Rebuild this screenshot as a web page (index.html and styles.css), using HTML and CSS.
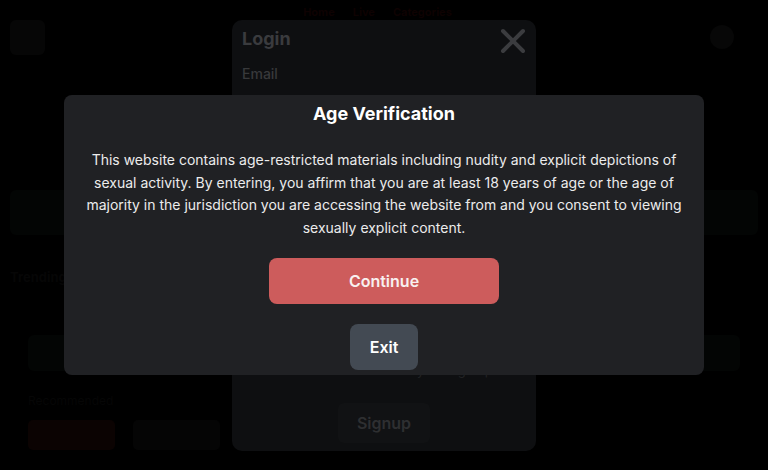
FILE: index.html
```html
<!DOCTYPE html>
<html lang="en">
<head>
<meta charset="utf-8">
<title>Age Verification</title>
<link rel="stylesheet" href="styles.css">
</head>
<body>
<div class="page">
  <header class="top">
    <div class="logo"></div>
    <nav class="nav"><span>Home</span><span>Live</span><span>Categories</span></nav>
    <div class="avatar"></div>
  </header>
  <div class="banner"></div>
  <div class="section-title">Trending</div>
  <div class="card"></div>
  <div class="subtitle">Recommended</div>
  <div class="actions">
    <span class="bg-btn red"></span>
    <span class="bg-btn gray"></span>
  </div>
</div>

<div class="login">
  <div class="login-head">
    <span class="login-title">Login</span>
    <svg class="close" width="26" height="26" viewBox="0 0 26 26" aria-hidden="true">
      <path d="M3 3 L23 23 M23 3 L3 23" stroke="#3b3c3f" stroke-width="4" stroke-linecap="round" fill="none"/>
    </svg>
  </div>
  <label class="login-label">Email</label>
  <div class="login-spacer"></div>
  <p class="login-note">Don't have an account yet? Sign up</p>
  <div class="login-foot"><span class="signup">Signup</span></div>
</div>

<div class="age">
  <h2 class="age-title">Age Verification</h2>
  <p class="age-text">This website contains age-restricted materials including nudity and explicit depictions of sexual activity. By entering, you affirm that you are at least 18 years of age or the age of majority in the jurisdiction you are accessing the website from and you consent to viewing sexually explicit content.</p>
  <div class="age-actions">
    <button class="btn-continue">Continue</button>
    <button class="btn-exit">Exit</button>
  </div>
</div>
</body>
</html>
```
FILE: styles.css
```css
* { box-sizing: border-box; }
html, body { margin: 0; height: 100%; }
body {
  background: #000;
  font-family: Inter, "Noto Sans", Arial, sans-serif;
  overflow: hidden;
  position: relative;
}

/* dimmed background page */
.page {
  padding: 0 10px;
  display: flex;
  flex-direction: column;
}
.top {
  display: flex;
  justify-content: space-between;
  align-items: flex-start;
  height: 60px;
}
.logo {
  margin-top: 20px;
  width: 35px;
  height: 35px;
  border-radius: 6px;
  background: #060606;
}
.nav {
  display: flex;
  gap: 18px;
  margin-top: 5px;
  font-size: 11px;
  font-weight: 700;
}
.nav span { color: #0e0202; }
.avatar {
  margin-top: 25px;
  margin-right: 24px;
  width: 24px;
  height: 24px;
  border-radius: 50%;
  background: #070707;
}
.banner {
  margin-top: 130px;
  height: 45px;
  border-radius: 6px;
  background: #030504;
}
.section-title {
  margin-top: 34px;
  font-size: 13px;
  font-weight: 700;
  color: #060606;
}
.card {
  margin: 50px 18px 0;
  height: 36px;
  border-radius: 6px;
  background: #030504;
}
.subtitle {
  margin: 22px 18px 0;
  font-size: 12px;
  color: #060606;
}
.actions {
  display: flex;
  gap: 18px;
  margin: 12px 18px 0;
}
.bg-btn {
  width: 87px;
  height: 30px;
  border-radius: 5px;
}
.bg-btn.red { background: #0b0302; }
.bg-btn.gray { background: #050505; }

/* login modal (behind) */
.login {
  position: absolute;
  left: 232px;
  top: 20px;
  width: 304px;
  height: 431px;
  background: #0e0f11;
  border-radius: 10px;
  padding: 6px 10px 8px;
  display: flex;
  flex-direction: column;
}
.login-head {
  display: flex;
  justify-content: space-between;
  align-items: center;
}
.login-title {
  font-size: 18px;
  font-weight: 700;
  color: #3a3b3e;
  line-height: 22px;
  margin-top: -2px;
}
.close { margin-top: 2px; }
.login-label {
  margin-top: 11px;
  font-size: 14px;
  font-weight: 500;
  color: #38393b;
}
.login-spacer { flex: 1; }
.login-note {
  margin: 0 0 25px;
  text-align: center;
  font-size: 13px;
  color: #222325;
}
.login-foot {
  display: flex;
  justify-content: center;
}
.signup {
  width: 92px;
  height: 40px;
  border-radius: 6px;
  background: #111214;
  color: #2e2f31;
  font-size: 16px;
  font-weight: 600;
  display: flex;
  align-items: center;
  justify-content: center;
}

/* age verification modal */
.age {
  position: absolute;
  left: 64px;
  top: 95px;
  width: 640px;
  height: 280px;
  background: #202124;
  border-radius: 8px;
  padding: 5px 20px 5px;
  display: flex;
  flex-direction: column;
  align-items: center;
  text-align: center;
}
.age-title {
  margin: 0;
  font-size: 18px;
  line-height: 27px;
  font-weight: 700;
  color: #fff;
}
.age-text {
  margin: 22px 0 0;
  font-size: 14px;
  line-height: 22.5px;
  color: #ececec;
}
.age-actions {
  margin-top: 19px;
  display: flex;
  flex-direction: column;
  align-items: center;
  gap: 20px;
}
button {
  font-family: inherit;
  border: none;
  cursor: pointer;
}
.btn-continue {
  width: 230px;
  height: 46px;
  border-radius: 8px;
  background: #cd5c5c;
  color: #f8f0f0;
  font-size: 16px;
  font-weight: 600;
}
.btn-exit {
  height: 46px;
  padding: 0 20px;
  border-radius: 8px;
  background: #434a53;
  color: #fff;
  font-size: 16px;
  font-weight: 600;
}
```
